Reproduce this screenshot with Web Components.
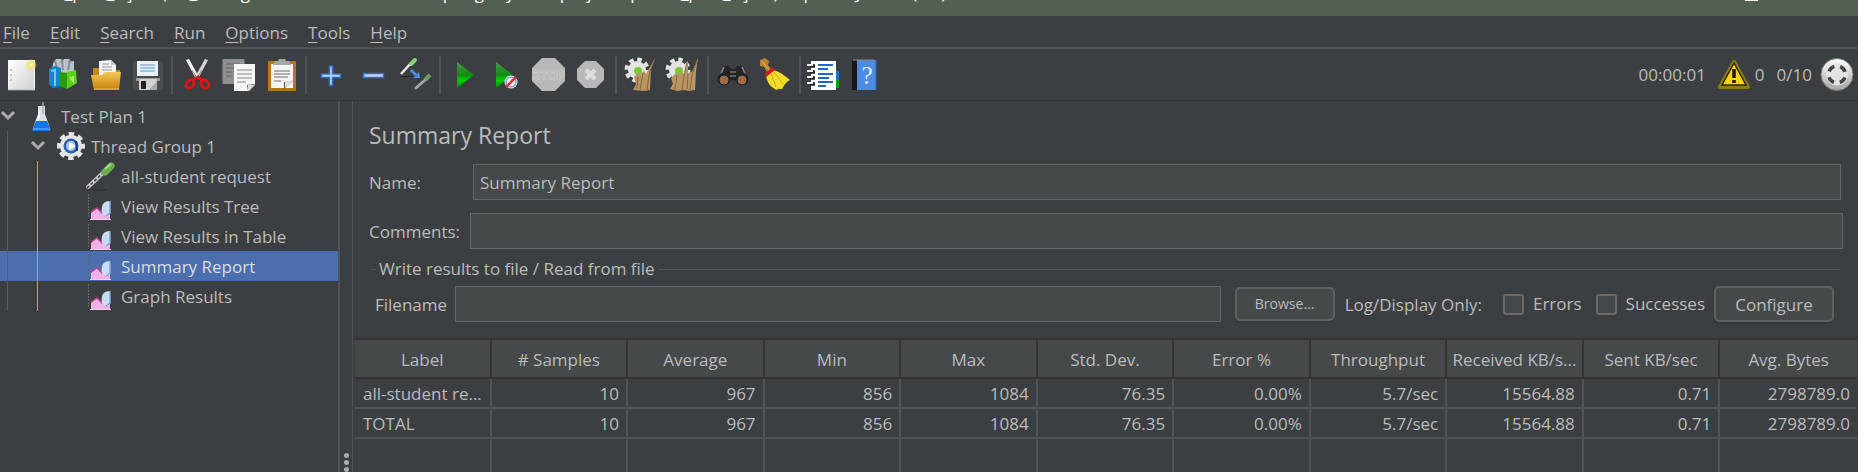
<!DOCTYPE html>
<html lang="en">
<head>
<meta charset="utf-8">
<title>Apache JMeter</title>
<style>
  html, body { margin: 0; height: 100%; }
  body {
    font: 17px/24px "Open Sans", "Noto Sans", sans-serif;
    color: #bbbbbb; background: #3c3f41;
    --line: #515456; --dark: #323436; --field: #45494a; --edge: #646769; --select: #4b6eaf;
    overflow: hidden;
  }
</style>
</head>
<body>
<jm-app></jm-app>

<script>
const ICONS = {
  page: `<defs><linearGradient id="a" x2="1" y2="1"><stop stop-color="#fff"/><stop offset="1" stop-color="#cfcfcf"/></linearGradient><radialGradient id="g"><stop stop-color="#fffbd0"/><stop offset=".5" stop-color="#f1e36a"/><stop offset="1" stop-color="#f1e36a" stop-opacity="0"/></radialGradient></defs>
    <rect x="5.5" y="3.5" width="26" height="29" fill="url(#a)" stroke="#f6f6f6"/><path d="M8 12v2M8 17v2M8 22v2" stroke="#999"/><path d="M5 33h27" stroke="#999"/><circle cx="28" cy="8" r="6" fill="url(#g)"/>`,
  templates: `<path d="M8 6l3-4h6l-2 4 4-4h6l-2 3 6-1v14H7z" fill="#b9c3ca"/><path d="M10 4l3 10M17 3l1 10M25 3l-2 10" stroke="#7f9099" stroke-width="2"/>
    <path d="M4 12l6-3 6 2v19l-8 1-4-4z" fill="#1287d0"/><path d="M6 14l4-1v16" fill="none" stroke="#7cc4f0" stroke-width="2"/><path d="M10 30l6 2 2-4z" fill="#0b5f9b"/>
    <path d="M15 15l7 1v16l-7-3z" fill="#2a9a10"/><path d="M22 15l9-2 1 13-10 6z" fill="#5cd11c"/><path d="M25 20l3 4v-5" fill="none" stroke="#a8ee77" stroke-width="2"/>`,
  open: `<defs><linearGradient id="a" y2="1" x2="0"><stop stop-color="#f4c55a"/><stop offset="1" stop-color="#c98208"/></linearGradient></defs>
    <path d="M6 11h6l2 2h19v12H6z" fill="#c48712"/><path d="M12 4l12-1 5 5v12H12z" fill="#f3f3f3"/><path d="M15 7h7M15 10h10M15 13h10" stroke="#999"/><path d="M24 3v5h5z" fill="#c4c4c4"/>
    <path d="M4 18h11l3-3h16l-2 18H7z" fill="url(#a)"/><path d="M7 32h25" stroke="#f0bb45"/>`,
  save: `<path d="M5 4h27l2 2v27H7l-3-3V6z" fill="#4b4b4b"/><path d="M7 21h24v3H7z" fill="#9a9a9a"/><rect x="8" y="4" width="21" height="15" fill="#e9f1f8"/><path d="M11 8h15M11 11h15M11 14h15" stroke="#8db4d8" stroke-width="1.5"/>
    <rect x="10" y="22" width="18" height="11" fill="#d2d2d2"/><rect x="12" y="24" width="5" height="8" fill="#222"/><path d="M20 33l8-9v9z" fill="#aaa"/>`,
  cut: `<path d="M7 3l3-1 10 18-3 2z" fill="#f1f1f1"/><path d="M29 3l-3-1-10 18 3 2z" fill="#d4d4d4"/><path d="M13 13l5 8 5-8" stroke="#8c8c8c" fill="none"/>
    <g fill="none" stroke="#dc1414" stroke-width="3"><ellipse cx="11" cy="27" rx="3.5" ry="4.5" transform="rotate(35 11 27)"/><ellipse cx="26" cy="27" rx="3.5" ry="4.5" transform="rotate(-35 26 27)"/><path d="M14 23l5-3 4 3"/></g>`,
  copy: `<rect x="1.5" y="2" width="22" height="25" fill="#8f8f8f"/><path d="M5 7h14M5 11h8M5 15h6M5 19h6" stroke="#717171" stroke-width="1.5"/>
    <path d="M13 7h21v21l-6 6H13z" fill="#f5f5f5"/><path d="M16 13h15M16 17h15M16 21h15M16 25h9" stroke="#aaa" stroke-width="1.5"/><path d="M34 27l-7 7-1-6z" fill="#555"/><path d="M33 28h-6v6z" fill="#ddd"/>`,
  paste: `<rect x="5" y="4" width="28" height="30" rx="1" fill="#b5771b"/><rect x="8" y="7" width="22" height="24" fill="#f4f4f4"/><path d="M10 8h18l-2-4h-3l-1-2h-6l-1 2h-3z" fill="#a6a6a0"/>
    <path d="M11 14h16M11 17h16M11 20h14M11 24h7" stroke="#999" stroke-width="1.5"/><path d="M30 24l-9 8v-7z" fill="#555"/><path d="M30 23l-2 4-6 4v-6z" fill="#ddd"/>`,
  plus: `<path d="M16.5 9h3v8h8v3.5h-8v8h-3v-8h-8V17h8z" fill="#b9d6fb" stroke="#2f6fd0" stroke-width="1.5"/>`,
  minus: `<rect x="8.5" y="16.5" width="20" height="4" fill="#b9d6fb" stroke="#2f6fd0" stroke-width="1.5"/>`,
  toggle: `<path d="M4 17L14 6" stroke="#e6e6e6" stroke-width="2.5"/><path d="M14 7l4-4" stroke="#8fce7c" stroke-width="4" stroke-linecap="round"/><path d="M4 19.5h12" stroke="#222"/>
    <path d="M14 13l5 5" stroke="#4a90ee" stroke-width="2.5"/><path d="M23 21h-7l6-6z" fill="#4a90ee"/>
    <path d="M19 31L28 23" stroke="#a4a4a4" stroke-width="3" stroke-linecap="round"/><path d="M28 23l5-5" stroke="#6f9d62" stroke-width="4"/>`,
  play: `<defs><linearGradient id="a" y2="1" x2="0"><stop stop-color="#4b9a4b"/><stop offset=".5" stop-color="#128a12"/><stop offset=".7" stop-color="#00d000"/><stop offset="1" stop-color="#008c00"/></linearGradient></defs><path d="M10 5l17 13L10 31z" fill="url(#a)"/>`,
  playnow: `<defs><linearGradient id="a" y2="1" x2="0"><stop stop-color="#4b9a4b"/><stop offset=".5" stop-color="#128a12"/><stop offset=".7" stop-color="#00d000"/><stop offset="1" stop-color="#008c00"/></linearGradient></defs><path d="M7 5l17 13L7 31z" fill="url(#a)"/>
    <circle cx="22" cy="25" r="6.5" fill="#e8ecf4"/><circle cx="22" cy="25" r="5" fill="none" stroke="#87a4cc" stroke-width="1.5"/><path d="M17 30l10-10" stroke="#d33" stroke-width="2.5"/>`,
  stop: `<path d="M11 1h13l10 10v13L24 34H11L1 24V11z" fill="#b8b8b8"/><text x="17.5" y="23" font-size="12" font-weight="700" text-anchor="middle" fill="#b0b0b0" stroke="#d2d2d2" stroke-width=".6" font-family="Liberation Sans, sans-serif">STOP</text>`,
  shutdown: `<path d="M12 4h11l8 8v11l-8 8H12l-8-8V12z" fill="#b8b8b8"/><path d="M13 13l9 9m0-9l-9 9" stroke="#dedede" stroke-width="4"/>`,
  clear: `<circle cx="14" cy="13" r="9" fill="#e4e4e4"/><circle cx="14" cy="13" r="10.5" fill="none" stroke="#e4e4e4" stroke-width="4" stroke-dasharray="4.5 3.746"/><circle cx="15" cy="14" r="4" fill="#7cc832"/>
    <path d="M32 1l-4 11-1 21-5 1-12-1 3-6-2-7 5-5 2 2 3-3 2 3z" fill="#b99465"/><path d="M31 3l-5 15-2 15M20 16l-3 17M15 20l-1 12" stroke="#866540" fill="none"/>`,
  clearall: `<circle cx="13" cy="13" r="9" fill="#e4e4e4"/><circle cx="13" cy="13" r="10.5" fill="none" stroke="#e4e4e4" stroke-width="4" stroke-dasharray="4.5 3.746"/><circle cx="14" cy="14" r="4" fill="#7cc832"/>
    <path d="M33 1l-2 13-1 19-6 1-5-1-6 1-8-2 3-5-2-6 5-5 2 2 4-3 2 2 4-14v13l4-1z" fill="#b99465"/><path d="M32 3l-5 15-2 15M22 5l-3 14-2 14M12 18l-2 14M23 17l-1 15" stroke="#866540" fill="none"/>`,
  search: `<path d="M9 9h5l2 3h4l2-3h5l6 14H3z" fill="#242424"/><path d="M9 10l-5 11M27 10l5 11" stroke="#888" stroke-width="1.5"/><circle cx="9" cy="22" r="6.5" fill="#222"/><circle cx="27" cy="22" r="6.5" fill="#222"/><circle cx="9" cy="23" r="4" fill="#b26530" stroke="#777"/><circle cx="27" cy="23" r="4" fill="#b26530" stroke="#777"/><path d="M15 15h6M15 19h6" stroke="#9a9a9a"/>`,
  broom: `<path d="M3 3l5-2 4 3-1 4 3 4-4 3-3-5-4-1z" fill="#b98331"/><path d="M5 4l7 9" stroke="#e6b566"/><path d="M15 13c7 1 12 5 18 10-4 2-5 4-8 9-3 0-4-1-5 1-5-2-10-6-11-15z" fill="#f5dc2a"/><path d="M14 17l5 13M17 15l9 12" stroke="#c9a60a"/><path d="M8 16l8-6 2 3-9 7z" fill="#d01c1c"/>`,
  helper: `<rect x="27" y="14" width="5" height="9" fill="#1673d0"/><rect x="27" y="23" width="5" height="8" fill="#109a20"/><rect x="4" y="4" width="25" height="29" fill="#fff"/><path d="M11 8h15M11 12h10M11 17h15M11 21h11M11 25h15M11 29h8" stroke="#2168c4" stroke-width="1.8"/>
    <path d="M3 9h5M3 15h5M3 21h5M3 27h5" stroke="#222" stroke-width="3.5"/><path d="M0 8h6M0 14h6M0 20h6M0 26h6" stroke="#eee" stroke-width="2"/>`,
  help: `<path d="M3 4l5-1v30H3z" fill="#10151c"/><path d="M8 3h19v30H8z" fill="#4b8be0"/><path d="M27 4v29" stroke="#2d65b4"/><path d="M4 3h21" stroke="#8a8a8a"/><text x="18" y="27" font-size="25" text-anchor="middle" fill="#e8f0fc" font-family="Liberation Serif, serif">?</text>`,
  warn: `<path d="M17 5l14 25H3z" fill="#7a6a10" stroke="#8f7d1a" stroke-width="4" stroke-linejoin="round"/><path d="M17 6l12 22H5z" fill="#ffd60a" stroke="#2a2500" stroke-width="1.5"/><path d="M17 12v9M17 23v3" stroke="#1a1a1a" stroke-width="3.5"/>`,
  remote: `<defs><linearGradient id="a" x2="0" y2="1"><stop stop-color="#fff"/><stop offset="1" stop-color="#a4a4a4"/></linearGradient></defs><circle cx="18" cy="17.5" r="16" fill="url(#a)" stroke="#777"/><circle cx="18" cy="17.5" r="11" fill="#e3e3e3"/><circle cx="18" cy="17.5" r="8.5" fill="none" stroke="#454545" stroke-width="3.5" stroke-dasharray="7.35 6" stroke-dashoffset="-3"/>`,
  flask: `<path d="M13 6h7v8l5 14q1 3-2 3H10q-3 0-2-3l5-14z" fill="#d9e0e6"/><path d="M11 21h11l3 7q1 3-2 3H10q-3 0-2-3z" fill="#1474e0"/><path d="M8 29h17" stroke="#7db7f5"/><path d="M18 2v12" stroke="#aaa" stroke-width="1.5"/><path d="M14 10v8M15 15l-3 6" stroke="#fff"/>`,
  gear: `<circle cx="16" cy="16" r="11" fill="#e6e6e6"/><circle cx="16" cy="16" r="12" fill="none" stroke="#e6e6e6" stroke-width="4" stroke-dasharray="5.4 4.025" stroke-dashoffset="2.7"/><circle cx="16" cy="16" r="7.5" fill="#2d62a8"/><circle cx="16" cy="16" r="5" fill="#a9c8ee"/><path d="M14 12l7 4-7 4z" fill="#fff"/><path d="M21 11l1 10" stroke="#163a73" stroke-width="2"/>`,
  pipette: `<path d="M5 27L21 12" stroke="#c9c9c9" stroke-width="4" stroke-linecap="round"/><path d="M4 28L21 12" stroke="#3c3f41" stroke-width="1.5" stroke-dasharray="3 2"/><path d="M22 12l6-6" stroke="#6cae4b" stroke-width="7" stroke-linecap="round"/><path d="M22 9l6-5" stroke="#a8dc88" stroke-width="2"/><path d="M5 30h19" stroke="#292b2c"/>`,
  graph: `<path d="M5.5 4v24" stroke="#666" stroke-dasharray="2 1"/><path d="M8 29v-6l6-5 4 4 3-4 6 3v8z" fill="#f3b0e6"/><path d="M8 22l6-4 5 5 3-3" fill="none" stroke="#c0428e" stroke-width="1.5"/><path d="M19 23q-2-12 8-12v12q-2 1-4 3-2 0-4-3z" fill="#c8dcf6"/><path d="M27 11v12l-4 3" fill="none" stroke="#86a7d8" stroke-width="1.5"/><path d="M7 29.5h21" stroke="#e8d8e8"/>`,
  chevron: `<path d="M2 4l6 6 6-6" fill="none" stroke="#adadad" stroke-width="3"/>`
};

function define(name, html) {
  customElements.define(name, class extends HTMLElement {
    connectedCallback() {
      if (this.shadowRoot) return;
      const root = this.attachShadow({ mode: "open" });
      const t = document.createElement("template");
      t.innerHTML = typeof html === "function" ? html(this) : html;
      root.append(t.content.cloneNode(true));
    }
  });
}

define("jm-icon", el => {
  const box = el.getAttribute("box") || 36;
  return `<style>:host{display:block;flex:none}svg{display:block}</style>
    <svg width="${box}" height="${box}" viewBox="0 0 ${box} ${box}" aria-hidden="true">${ICONS[el.getAttribute("name")]}</svg>`;
});

define("jm-titlebar", `<style>
  :host { display: block; height: 16px; background: #535f53; color: #fff; overflow: hidden; }
  div { display: flex; justify-content: space-between; margin-top: -18px; padding: 0 100px 0 35px; white-space: pre; line-height: 22px; }
  i { width: 13px; height: 2px; margin-top: 17px; background: #fff; }
</style><div><span>test_plan_1.jmx (D:\\_coding s\\material\\semester 7\\spring\\my-final-project-api\\test_plan_1.jmx) - Apache JMeter (5.5)</span><i></i></div>`);

define("jm-menubar", `<style>
  :host { display: block; border-bottom: 2px solid var(--line); }
  nav { display: flex; gap: 20px; padding: 5px 3px 2px; }
  button { all: unset; line-height: 24px; }
  u { text-underline-offset: 3px; text-decoration-thickness: 1px; }
</style><nav>${["File", "Edit", "Search", "Run", "Options", "Tools", "Help"].map(m => `<button><u>${m[0]}</u>${m.slice(1)}</button>`).join("")}</nav>`);

const TOOLS = [
  [["page", "New"], ["templates", "Templates"], ["open", "Open"], ["save", "Save"]],
  [["cut", "Cut"], ["copy", "Copy"], ["paste", "Paste"]],
  [["plus", "Expand all"], ["minus", "Collapse all"], ["toggle", "Toggle"]],
  [["play", "Start"], ["playnow", "Start no pauses"], ["stop", "Stop"], ["shutdown", "Shutdown"]],
  [["clear", "Clear"], ["clearall", "Clear all"]],
  [["search", "Search"], ["broom", "Reset search"]],
  [["helper", "Function helper"], ["help", "Help"]]
];
define("jm-toolbar", `<style>
  :host { display: flex; align-items: center; height: 51px; border-bottom: 1px solid var(--dark); }
  .group { display: flex; }
  .group + .group::before { content: ""; width: 2px; height: 38px; margin: 0 3px; background: var(--line); }
  button { all: unset; width: 42px; display: grid; place-items: center; }
  .status { display: flex; align-items: center; margin-left: auto; padding-right: 3px; }
  .status span { padding-top: 1px; }
  .time { margin-right: 11px; }
  .count { margin: 0 12px 0 2px; }
  .threads { margin-right: 7px; }
</style>${TOOLS.map(g => `<div class="group">${g.map(([n, l]) => `<button aria-label="${l}"><jm-icon name="${n}"></jm-icon></button>`).join("")}</div>`).join("")}
<div class="status"><span class="time">00:00:01</span><jm-icon name="warn"></jm-icon><span class="count">0</span><span class="threads">0/10</span><jm-icon name="remote"></jm-icon></div>`);

define("jm-tree-item", el => `<style>
  :host { display: flex; align-items: center; height: 30px; gap: 6px; box-sizing: border-box; white-space: nowrap; }
  :host([level="1"]) { padding-left: 30px; }
  :host([level="2"]) { padding-left: 83px; }
  :host([open]) { gap: 4px; }
  :host([selected]) { background: var(--select); color: #dddddd; }
  .toggle { margin-right: 5px; }
  span { padding-top: 2px; }
</style>${el.hasAttribute("open") ? '<jm-icon class="toggle" name="chevron" box="16"></jm-icon>' : ""}
<jm-icon name="${el.getAttribute("icon")}" box="32"></jm-icon><span><slot></slot></span>`);

define("jm-tree", `<style>
  :host { display: block; width: 338px; flex: none; border-right: 2px solid var(--line); }
  .tree { position: relative; }
  .guide { position: absolute; width: 1px; bottom: 0; pointer-events: none; }
  .outer { left: 7px; top: 30px; background: #5a5d5f; }
  .inner { left: 37px; top: 60px; background: #77aee0; }
</style><div class="tree" role="tree">
  <jm-tree-item role="treeitem" level="0" open icon="flask">Test Plan 1</jm-tree-item>
  <jm-tree-item role="treeitem" level="1" open icon="gear">Thread Group 1</jm-tree-item>
  <jm-tree-item role="treeitem" level="2" icon="pipette">all-student request</jm-tree-item>
  <jm-tree-item role="treeitem" level="2" icon="graph">View Results Tree</jm-tree-item>
  <jm-tree-item role="treeitem" level="2" icon="graph">View Results in Table</jm-tree-item>
  <jm-tree-item role="treeitem" level="2" icon="graph" selected>Summary Report</jm-tree-item>
  <jm-tree-item role="treeitem" level="2" icon="graph">Graph Results</jm-tree-item>
  <span class="guide outer"></span><span class="guide inner"></span>
</div>`);

define("jm-splitter", `<style>
  :host { display: flex; flex-direction: column; justify-content: flex-end; align-items: center; gap: 2px; width: 13px; flex: none; box-sizing: border-box; border-right: 1px solid var(--line); }
  i { width: 5px; height: 5px; border-radius: 50%; background: #adadad; }
</style><i></i><i></i><i></i>`);

const FIELD = `input[type=text] { box-sizing: border-box; height: 36px; min-width: 0; flex: 1; margin: 0; padding: 0 6px; font: inherit; color: inherit; background: var(--field); border: 1px solid var(--edge); border-radius: 0; outline: 0; }`;

define("jm-field", el => `<style>
  :host { display: flex; align-items: center; }
  label { width: var(--label-width); flex: none; padding-top: 2px; }
  ${FIELD}
</style><label for="f">${el.getAttribute("label")}</label><input id="f" type="text" value="${el.getAttribute("value") || ""}">`);

define("jm-file-panel", `<style>
  :host { display: block; }
  fieldset { margin: 0 18px 0 2px; padding: 0; border: 0 solid var(--line); border-top-width: 1px; min-width: 0; }
  legend { margin-left: 5px; padding: 0 3px; line-height: 24px; }
  .row { display: flex; align-items: center; padding: 5px 6px 0 4px; }
  .name { width: 80px; flex: none; }
  .name, .row > span { padding-top: 2px; }
  ${FIELD}
  button { box-sizing: border-box; margin: 0; padding: 0; flex: none; font: inherit; color: inherit; background: var(--field); border: 2px solid #5e6162; border-radius: 5px; box-shadow: 0 2px 1px #35383a; }
  .browse { width: 100px; height: 34px; margin: 0 10px 0 14px; font-size: 14px; }
  .configure { width: 120px; height: 36px; margin-left: 9px; padding-top: 2px; }
  input[type=checkbox] { appearance: none; box-sizing: border-box; width: 21px; height: 21px; margin: 0 9px 0 0; border: 2px solid #6b6b6b; border-radius: 3px; background: #43494a; }
  .check { display: flex; align-items: center; margin-left: 14px; }
  .row > span { margin-right: 7px; }
</style>
<fieldset><legend>Write results to file / Read from file</legend>
  <div class="row">
    <label class="name" for="file">Filename</label><input id="file" type="text">
    <button class="browse">Browse...</button><span>Log/Display Only:</span>
    <label class="check"><input type="checkbox">Errors</label>
    <label class="check"><input type="checkbox">Successes</label>
    <button class="configure">Configure</button>
  </div>
</fieldset>`);

const HEAD = ["Label", "# Samples", "Average", "Min", "Max", "Std. Dev.", "Error %", "Throughput", "Received KB/s...", "Sent KB/sec", "Avg. Bytes"];
const ROWS = [
  ["all-student re...", "10", "967", "856", "1084", "76.35", "0.00%", "5.7/sec", "15564.88", "0.71", "2798789.0"],
  ["TOTAL", "10", "967", "856", "1084", "76.35", "0.00%", "5.7/sec", "15564.88", "0.71", "2798789.0"]
];
define("jm-results", `<style>
  :host { display: grid; border-top: 2px solid var(--dark); padding-left: 2px; }
  table { width: 100%; table-layout: fixed; border-collapse: separate; border-spacing: 0; }
  th, td { box-sizing: border-box; padding: 2px 7px 0 8px; white-space: nowrap; overflow: hidden; border-right: 2px solid var(--line); border-bottom: 2px solid var(--line); font-weight: 400; text-align: right; }
  th { height: 39px; padding: 2px 0 0; text-align: center; background: var(--field); border-color: var(--dark); }
  td { height: 30px; }
  td:first-child { text-align: left; }
  tr > :last-child { border-right: 0; }
  .rest td { height: auto; border-bottom: 0; }
</style><table><thead><tr>${HEAD.map(h => `<th scope="col">${h}</th>`).join("")}</tr></thead>
<tbody>${ROWS.map(r => `<tr>${r.map(c => `<td>${c}</td>`).join("")}</tr>`).join("")}<tr class="rest">${HEAD.map(() => "<td></td>").join("")}</tr></tbody></table>`);

define("jm-report", `<style>
  :host { display: flex; flex-direction: column; flex: 1; min-width: 0; }
  .form { padding-left: 16px; }
  h1 { margin: 0; padding: 18px 0 13px; font-size: 23px; line-height: 32px; font-weight: 400; }
  .name { --label-width: 104px; margin: 0 17px 13px 0; }
  .comments { --label-width: 101px; margin: 0 15px 8px 0; }
  jm-results { flex: 1; margin: 16px 1px 0 0; }
</style><div class="form">
  <h1>Summary Report</h1>
  <jm-field class="name" label="Name:" value="Summary Report"></jm-field>
  <jm-field class="comments" label="Comments:"></jm-field>
  <jm-file-panel></jm-file-panel>
</div><jm-results></jm-results>`);

define("jm-app", `<style>
  :host { display: flex; flex-direction: column; height: 100vh; }
  main { display: flex; flex: 1; min-height: 0; }
</style><jm-titlebar></jm-titlebar><jm-menubar></jm-menubar><jm-toolbar></jm-toolbar>
<main><jm-tree></jm-tree><jm-splitter></jm-splitter><jm-report></jm-report></main>`);
</script>
</body>
</html>
